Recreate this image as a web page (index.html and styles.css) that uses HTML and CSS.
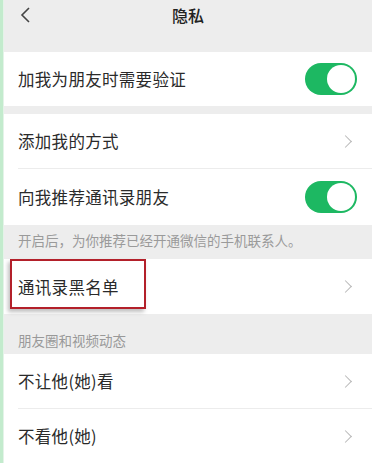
FILE: index.html
```html
<!DOCTYPE html>
<html lang="zh">
<head>
  <meta charset="UTF-8">
  <meta name="viewport" content="width=device-width, initial-scale=1.0">
  <title>隐私</title>
  <link rel="stylesheet" href="styles.css">
</head>
<body>
  <div class="page">
    <div class="topbar">
      <svg class="back" width="12" height="18" viewBox="0 0 12 18">
        <path d="M10 2 L3 9 L10 16" fill="none" stroke="#444" stroke-width="1.6"/>
      </svg>
      <div class="title">隐私</div>
    </div>

    <div class="group">
      <div class="row">
        <span class="label">加我为朋友时需要验证</span>
        <span class="switch"><span class="knob"></span></span>
      </div>
    </div>

    <div class="gap"></div>

    <div class="group">
      <div class="row">
        <span class="label">添加我的方式</span>
        <span class="arrow"></span>
      </div>
      <div class="row row-tall">
        <span class="label">向我推荐通讯录朋友</span>
        <span class="switch"><span class="knob"></span></span>
      </div>
    </div>

    <div class="note">开启后，为你推荐已经开通微信的手机联系人。</div>

    <div class="group">
      <div class="row marked">
        <span class="label">通讯录黑名单</span>
        <span class="arrow"></span>
        <div class="highlight"></div>
      </div>
    </div>

    <div class="section">朋友圈和视频动态</div>

    <div class="group group-open">
      <div class="row">
        <span class="label">不让他(她)看</span>
        <span class="arrow"></span>
      </div>
      <div class="row">
        <span class="label">不看他(她)</span>
        <span class="arrow"></span>
      </div>
    </div>
  </div>
</body>
</html>
```

FILE: styles.css
```css
html, body {
  margin: 0;
  padding: 0;
  height: 100%;
  font-family: "Noto Sans CJK SC", "Noto Sans", sans-serif;
}

body {
  background-color: #c3ebcd;
  padding-left: 3px;
  box-sizing: border-box;
  overflow: hidden;
}

.page {
  background-color: #ededed;
  border-left: 1px solid #e4f3e8;
  min-height: 100%;
}

.topbar {
  height: 52px;
  position: relative;
  display: flex;
  align-items: flex-start;
  justify-content: center;
}

.back {
  position: absolute;
  left: 15px;
  top: 6px;
}

.title {
  font-size: 16px;
  font-weight: 500;
  color: #222;
  line-height: 30px;
}

.group {
  background-color: #fff;
}

.row {
  height: 54px;
  margin-left: 14px;
  padding-right: 14px;
  display: flex;
  align-items: center;
  justify-content: space-between;
  border-bottom: 1px solid #ececec;
  position: relative;
}

.group .row:last-child {
  border-bottom: none;
}

/* список продолжается ниже края экрана */
.group-open .row:last-child {
  border-bottom: 1px solid #ececec;
}

.row-tall {
  height: 56px;
}

.label {
  font-size: 16.5px;
  color: #2a2a2a;
  letter-spacing: 0.3px;
}

.gap {
  height: 8px;
}

.switch {
  width: 52px;
  height: 32px;
  border-radius: 16px;
  background-color: #1db862;
  position: relative;
  margin-right: 1px;
}

.knob {
  position: absolute;
  right: 2px;
  top: 2px;
  width: 28px;
  height: 28px;
  border-radius: 50%;
  background-color: #fff;
}

.arrow {
  width: 8px;
  height: 8px;
  border-top: 1.5px solid #b8b8b8;
  border-right: 1.5px solid #b8b8b8;
  transform: rotate(45deg);
  margin-right: 8px;
}

.note {
  height: 34px;
  line-height: 30px;
  padding-left: 14px;
  font-size: 13.5px;
  color: #9a9a9a;
}

.marked {
  height: 55px;
}

/* красная рамка поверх строки */
.highlight {
  position: absolute;
  left: -8px;
  top: 0;
  width: 132px;
  height: 46px;
  border: 2px solid #b3202a;
  box-shadow: -2px 3px 4px rgba(0,0,0,0.25);
}

.section {
  height: 40px;
  line-height: 52px;
  padding-left: 14px;
  font-size: 13.5px;
  color: #999;
}
```
